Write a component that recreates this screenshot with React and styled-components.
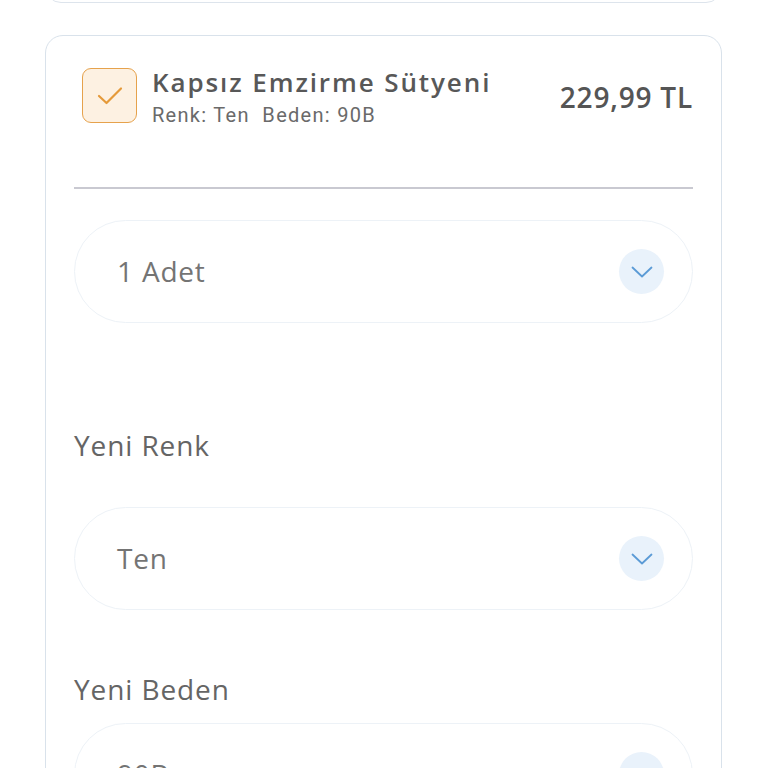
import React from 'react';
import styled, { createGlobalStyle } from 'styled-components';

const GlobalStyle = createGlobalStyle`
  html, body {
    margin: 0;
    padding: 0;
    background: #ffffff;
  }
  body {
    font-family: "Open Sans", "Noto Sans", sans-serif;
  }
  * {
    box-sizing: border-box;
  }
`;

const ChevronDown = () => (
  <svg width="22" height="12" viewBox="0 0 22 12" fill="none">
    <path d="M1.5 1.5 L11 10.5 L20.5 1.5" stroke="#5b9bd6" strokeWidth="1.8" strokeLinecap="round" strokeLinejoin="round" />
  </svg>
);

const CheckMark = () => (
  <svg width="26" height="20" viewBox="0 0 26 20" fill="none">
    <path d="M2 10 L9.5 17 L24 2.5" stroke="#e59a3a" strokeWidth="2.2" strokeLinecap="round" strokeLinejoin="round" />
  </svg>
);

const Select = ({ value, top }) => (
  <SelectBox $top={top}>
    <SelectValue>{value}</SelectValue>
    <ChevronCircle>
      <ChevronDown />
    </ChevronCircle>
  </SelectBox>
);

const App = () => {
  return (
    <>
      <GlobalStyle />
      <Page>
        <PrevCard />
        <Card>
          {/*Product header*/}
          <Header>
            <CheckBox>
              <CheckMark />
            </CheckBox>
            <Info>
              <Title>Kapsız Emzirme Sütyeni</Title>
              <Meta>Renk: Ten&nbsp;&nbsp;Beden: 90B</Meta>
            </Info>
            <Price>229,99 TL</Price>
          </Header>
          <Divider />

          {/*Quantity*/}
          <Select value="1 Adet" top={31} />

          {/*Color*/}
          <Label $top={106}>Yeni Renk</Label>
          <Select value="Ten" top={46} />

          {/*Size*/}
          <Label $top={63}>Yeni Beden</Label>
          <Select value="90B" top={18} />
        </Card>
      </Page>
    </>
  );
};

export default App;

const Page = styled.div`
  width: 768px;
  height: 768px;
  overflow: hidden;
  padding: 0 46px 0 45px;
`;

//Bottom of the card above
const PrevCard = styled.div`
  height: 40px;
  margin-top: -37px;
  border: 1.5px solid #dde4ec;
  border-radius: 16px;
`;

const Card = styled.div`
  margin-top: 32px;
  border: 1.5px solid #d9e2eb;
  border-radius: 18px;
  padding: 32px 28px 60px 28px;
`;

const Header = styled.div`
  display: flex;
  align-items: flex-start;
  padding-left: 8px;
`;

const CheckBox = styled.div`
  width: 55px;
  height: 55px;
  flex-shrink: 0;
  border: 1.5px solid #e6a24c;
  border-radius: 9px;
  background: #fdf1e2;
  display: flex;
  align-items: center;
  justify-content: center;
`;

const Info = styled.div`
  flex: 1;
  margin-left: 15px;
  display: flex;
  flex-direction: column;
`;

const Title = styled.div`
  font-family: "Open Sans", sans-serif;
  font-weight: 600;
  font-size: 26px;
  line-height: 30px;
  color: #585858;
  margin-top: -1px;
  letter-spacing: 1.9px;
`;

const Meta = styled.div`
  font-family: "Roboto", sans-serif;
  font-size: 20px;
  line-height: 24px;
  color: #6a6a6a;
  margin-top: 6px;
  letter-spacing: 1.3px;
`;

const Price = styled.div`
  font-family: "Open Sans", sans-serif;
  font-weight: 600;
  font-size: 28px;
  line-height: 34px;
  color: #555555;
  margin-top: 12px;
  white-space: nowrap;
  letter-spacing: 0.8px;
`;

const Divider = styled.div`
  height: 1.5px;
  background: #c9c9d1;
  margin-top: 60px;
`;

const SelectBox = styled.div`
  margin-top: ${({ $top }) => $top}px;
  height: 103px;
  border: 1.5px solid #edf2f7;
  border-radius: 52px;
  display: flex;
  align-items: center;
  justify-content: space-between;
  padding: 0 28px 0 42px;
`;

const SelectValue = styled.span`
  font-family: "Open Sans", sans-serif;
  font-size: 28px;
  color: #747474;
  letter-spacing: 0.8px;
`;

const ChevronCircle = styled.div`
  width: 45px;
  height: 45px;
  border-radius: 50%;
  background: #e9f2fb;
  display: flex;
  align-items: center;
  justify-content: center;
  padding-top: 2px;
`;

const Label = styled.div`
  margin-top: ${({ $top }) => $top}px;
  font-family: "Open Sans", sans-serif;
  font-size: 28px;
  line-height: 32px;
  color: #656565;
  letter-spacing: 0.9px;
`;
